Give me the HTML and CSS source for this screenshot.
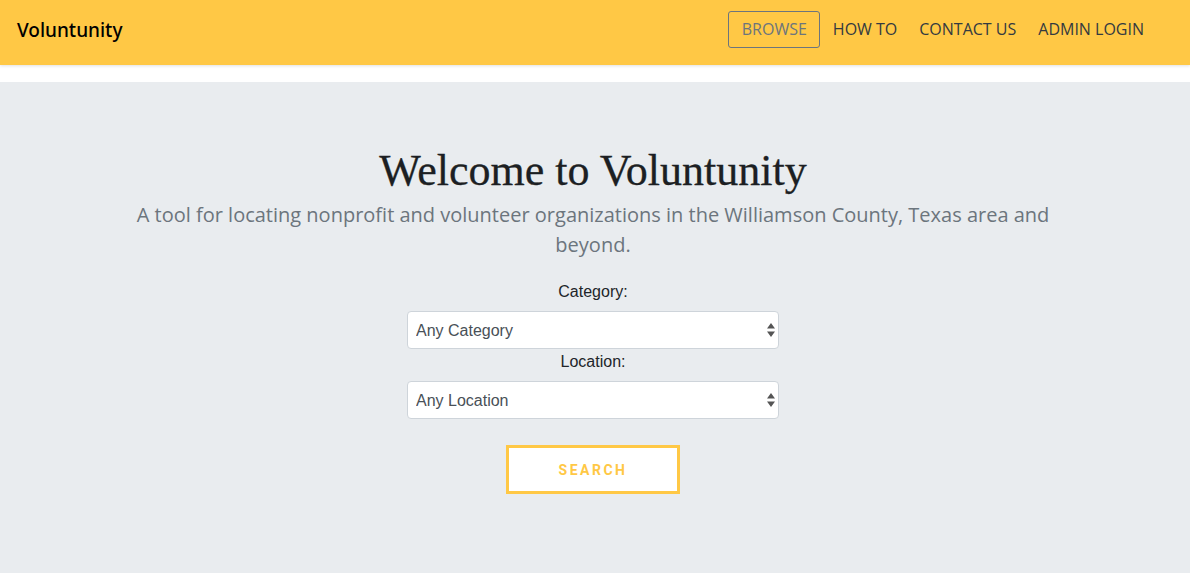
FILE: index.html
```html
<!DOCTYPE html>
<html>
<head>
<meta charset="utf-8">
<link rel="stylesheet" href="styles.css">
</head>
<body>
<nav class="navbar">
  <div class="brand">Voluntunity</div>
  <ul class="nav">
    <li><a class="nav-link active">BROWSE</a></li>
    <li><a class="nav-link">HOW TO</a></li>
    <li><a class="nav-link">CONTACT US</a></li>
    <li><a class="nav-link">ADMIN LOGIN</a></li>
  </ul>
</nav>
<div class="spacer"></div>
<main class="jumbo">
  <h1 class="title">Welcome to Voluntunity</h1>
  <p class="lead">A tool for locating nonprofit and volunteer organizations in the Williamson County, Texas area and beyond.</p>
  <form class="search-form">
    <label class="label">Category:</label>
    <div class="select-wrap">
      <select class="select"><option>Any Category</option></select>
      <svg class="arrows" width="8" height="14" viewBox="0 0 8 14"><path d="M4 0 L8 5.5 L0 5.5 Z M4 14 L8 8.5 L0 8.5 Z" fill="#555"/></svg>
    </div>
    <label class="label">Location:</label>
    <div class="select-wrap">
      <select class="select"><option>Any Location</option></select>
      <svg class="arrows" width="8" height="14" viewBox="0 0 8 14"><path d="M4 0 L8 5.5 L0 5.5 Z M4 14 L8 8.5 L0 8.5 Z" fill="#555"/></svg>
    </div>
    <button type="button" class="btn-search">SEARCH</button>
  </form>
</main>
</body>
</html>
```
FILE: styles.css
```css
* { box-sizing: border-box; }
html, body { margin: 0; padding: 0; }
body {
  background: #e9ecef;
  font-family: "Open Sans", "Noto Sans", sans-serif;
  color: #212529;
  height: 573px;
  overflow: hidden;
}
.navbar {
  height: 65px;
  background: #ffc845;
  display: flex;
  align-items: center;
  justify-content: space-between;
  padding: 0 35px 0 17px;
  box-shadow: 0 1px 3px rgba(0,0,0,0.12);
  position: relative;
}
.brand {
  font-family: "Noto Sans", "Open Sans", sans-serif;
  font-size: 19px;
  font-weight: 500;
  color: #000;
  margin-top: -6px;
}
.nav {
  list-style: none;
  margin: -6px 0 0 0;
  padding: 0;
  display: flex;
  align-items: center;
  gap: 0;
}
.nav-link {
  display: block;
  font-size: 16px;
  color: #343a40;
  padding: 7px 10px;
  border: 1px solid transparent;
  border-radius: 3px;
  line-height: 21px;
}
.nav-link.active {
  color: #6c757d;
  border-color: #6c757d;
  padding: 7px 12px 7px 13px;
  margin-right: 2px;
}
.spacer {
  height: 17px;
  background: #fff;
}
.jumbo {
  display: flex;
  flex-direction: column;
  align-items: center;
  padding-top: 64px;
  padding-right: 4px;
}
.title {
  font-family: "Liberation Serif", "DejaVu Serif", serif;
  font-weight: 400;
  font-size: 44px;
  line-height: 50px;
  margin: 0;
  color: #1c1f23;
  -webkit-text-stroke: 0.3px #1c1f23;
}
.lead {
  max-width: 940px;
  text-align: center;
  font-size: 20px;
  line-height: 30px;
  color: #6c757d;
  margin: 4px 0 0 0;
  font-weight: 400;
}
.search-form {
  display: flex;
  flex-direction: column;
  align-items: center;
  margin-top: 22px;
}
.label {
  font-family: "Liberation Sans", Arial, sans-serif;
  font-size: 16px;
  line-height: 20px;
  margin-bottom: 9px;
  color: #212529;
}
.select-wrap {
  position: relative;
  width: 372px;
  margin-bottom: 3px;
}
.select {
  appearance: none;
  -webkit-appearance: none;
  width: 100%;
  height: 38px;
  border: 1px solid #ced4da;
  border-radius: 4px;
  background: #fff;
  font-family: "Liberation Sans", Arial, sans-serif;
  font-size: 16px;
  color: #495057;
  padding: 0 8px;
}
.arrows {
  position: absolute;
  right: 4px;
  top: 12px;
  pointer-events: none;
}
.btn-search {
  margin-top: 23px;
  width: 174px;
  height: 49px;
  background: #fff;
  border: 3px solid #ffc845;
  color: #ffc845;
  font-family: "Roboto", "Liberation Sans", sans-serif;
  font-weight: 700;
  font-size: 14px;
  letter-spacing: 2.5px;
  border-radius: 0;
}
```
